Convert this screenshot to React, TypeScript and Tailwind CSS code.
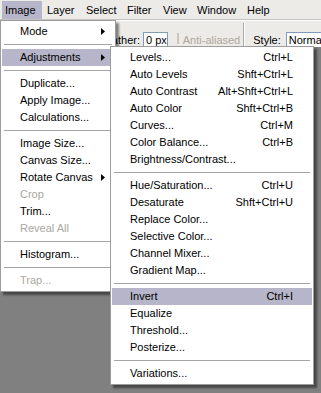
import React from "react";

type Item =
  | { kind: "sep" }
  | { kind: "item"; label: string; shortcut?: string; arrow?: boolean; disabled?: boolean; active?: boolean };

const sep: Item = { kind: "sep" };
const it = (label: string, extra: Partial<Extract<Item, { kind: "item" }>> = {}): Item => ({
  kind: "item",
  label,
  ...extra,
});

const imageMenu: Item[] = [
  it("Mode", { arrow: true }),
  sep,
  it("Adjustments", { arrow: true, active: true }),
  sep,
  it("Duplicate..."),
  it("Apply Image..."),
  it("Calculations..."),
  sep,
  it("Image Size..."),
  it("Canvas Size..."),
  it("Rotate Canvas", { arrow: true }),
  it("Crop", { disabled: true }),
  it("Trim..."),
  it("Reveal All", { disabled: true }),
  sep,
  it("Histogram..."),
  sep,
  it("Trap...", { disabled: true }),
];

const adjustMenu: Item[] = [
  it("Levels...", { shortcut: "Ctrl+L" }),
  it("Auto Levels", { shortcut: "Shft+Ctrl+L" }),
  it("Auto Contrast", { shortcut: "Alt+Shft+Ctrl+L" }),
  it("Auto Color", { shortcut: "Shft+Ctrl+B" }),
  it("Curves...", { shortcut: "Ctrl+M" }),
  it("Color Balance...", { shortcut: "Ctrl+B" }),
  it("Brightness/Contrast..."),
  sep,
  it("Hue/Saturation...", { shortcut: "Ctrl+U" }),
  it("Desaturate", { shortcut: "Shft+Ctrl+U" }),
  it("Replace Color..."),
  it("Selective Color..."),
  it("Channel Mixer..."),
  it("Gradient Map..."),
  sep,
  it("Invert", { shortcut: "Ctrl+I", active: true }),
  it("Equalize"),
  it("Threshold..."),
  it("Posterize..."),
  sep,
  it("Variations..."),
];

const bar = [
  { label: "Image", w: "w-[40px] pl-[3px] bg-[#b6b5c9]" },
  { label: "Layer", w: "w-[38px] pl-[5px]" },
  { label: "Select", w: "w-[41px] pl-[6px]" },
  { label: "Filter", w: "w-[36px] pl-[6px]" },
  { label: "View", w: "w-[34px] pl-[6px]" },
  { label: "Window", w: "w-[50px] pl-[6px]" },
  { label: "Help", w: "w-[34px] pl-[6px]" },
];

function Arrow() {
  return (
    <svg width="4" height="7" viewBox="0 0 4 7" className="shrink-0">
      <path d="M0 0 L4 3.5 L0 7 Z" fill="#000" />
    </svg>
  );
}

function Menu({ items, className }: { items: Item[]; className: string }) {
  return (
    <div
      className={`absolute bg-white border border-[#9c9c9c] pt-[2px] pb-[2px] shadow-[3px_3px_2px_rgba(0,0,0,0.45)] ${className}`}
    >
      {items.map((m, i) =>
        m.kind === "sep" ? (
          <div key={i} className="h-[9px] flex items-center px-[3px]">
            <div className="w-full h-px bg-[#a5a5a5]" />
          </div>
        ) : (
          <div key={i} className="px-[1px]">
            <div
              className={`h-[17px] flex items-center pl-[18px] pr-[19px] leading-[17px] whitespace-nowrap ${
                m.active ? "bg-[#b6b5c9]" : ""
              } ${m.disabled ? "text-[#a9a7a0]" : "text-black"}`}
            >
              <span className="flex-1">{m.label}</span>
              {m.shortcut && <span>{m.shortcut}</span>}
              {m.arrow && (
                <span className="mr-[-10px]">
                  <Arrow />
                </span>
              )}
            </div>
          </div>
        )
      )}
    </div>
  );
}

export default function App() {
  return (
    <div
      className="relative w-[321px] h-[393px] overflow-hidden flex flex-col text-[11px] text-black bg-[#808080]"
      style={{ fontFamily: '"Liberation Sans", Arial, sans-serif' }}
    >
      <div className="h-[20px] flex items-start bg-[#ecebe8] border-b border-[#c4c3c0]">
        {bar.map((b) => (
          <div key={b.label} className={`mt-[1px] h-[18px] leading-[18px] ${b.w} first:ml-[2px]`}>
            {b.label}
          </div>
        ))}
      </div>

      <div className="h-[27px] flex items-start pt-[11px] pl-[99px] bg-[#ecebe8] border-t border-white border-b border-b-[#a8a8a8] whitespace-nowrap">
        <span className="leading-[16px]">Feather:</span>
        <div className="ml-[3px] w-[41px] h-[16px] bg-white border border-[#7f9db9] leading-[14px] pl-[2px]">
          0 px
        </div>
        <div className="ml-[9px] mt-[1px] w-[11px] h-[11px] bg-white border border-[#c9c7ba]" />
        <span className="ml-[4px] w-[58px] leading-[16px] text-[#aca899]">Anti-aliased</span>
        <div className="ml-[3px] -mt-[9px] h-[24px] w-[2px] border-l border-[#a8a8a8] border-r border-r-white" />
        <span className="ml-[8px] leading-[16px]">Style:</span>
        <div className="ml-[5px] w-[40px] h-[16px] bg-white border border-[#7f9db9] leading-[14px] pl-[2px]">
          Normal
        </div>
      </div>

      <div className="flex-1 bg-[#808080]" />

      <Menu items={imageMenu} className="left-0 top-[20px] w-[116px]" />
      <Menu items={adjustMenu} className="left-[110px] top-[46px] w-[204px]" />
    </div>
  );
}
